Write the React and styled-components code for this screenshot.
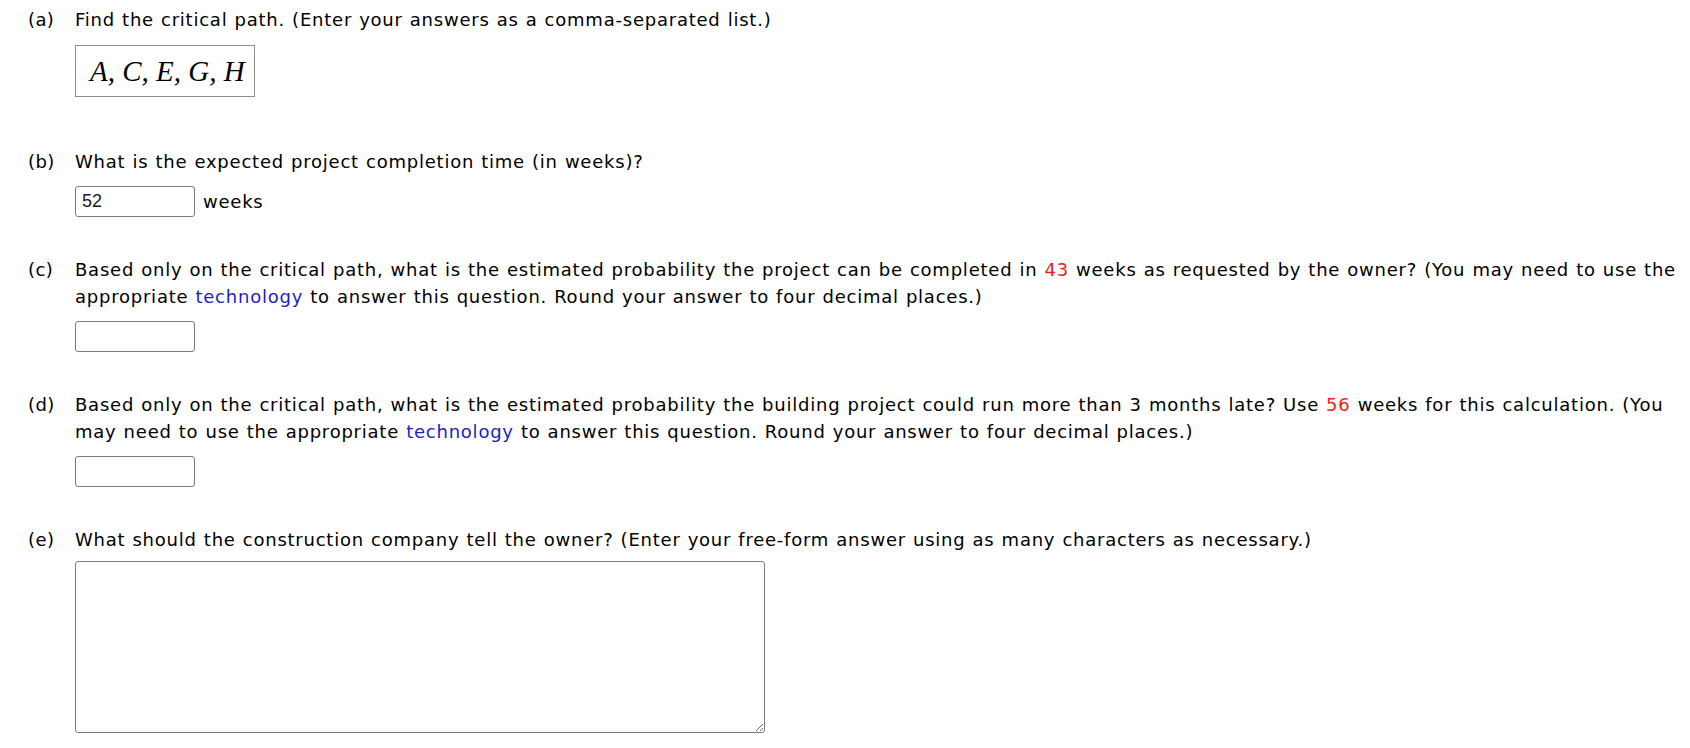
import React from "react";
import styled, { createGlobalStyle } from "styled-components";

const GlobalStyle = createGlobalStyle`
  html, body {
    margin: 0;
    padding: 0;
    background: #ffffff;
  }
  body {
    font-family: "DejaVu Sans", Verdana, sans-serif;
    color: #000000;
  }
`;

const Page = styled.div`
  padding: 6px 10px 0 28px;
  font-size: 18px;
  line-height: 27px;
  letter-spacing: 0.77px;
  word-spacing: 0.6px;
`;

const Part = styled.div`
  display: flex;
  margin-bottom: ${(p) => p.$after ?? 39}px;
`;

const Label = styled.div`
  flex: 0 0 47px;
  letter-spacing: 0.4px;
`;

const Body = styled.div`
  flex: 1;
  min-width: 0;
`;

const Question = styled.div``;

const Red = styled.span`
  color: #e8231a;
`;

const Link = styled.span`
  color: #1a1fc4;
`;

const AnswerRow = styled.div`
  display: flex;
  align-items: center;
  gap: 8px;
  margin-top: ${(p) => p.$top ?? 11}px;
`;

const MathBox = styled.div`
  box-sizing: border-box;
  height: 52px;
  padding: 0 9px 0 14px;
  display: flex;
  align-items: center;
  border: 1px solid #8c8c8c;
  font-family: "Liberation Serif", "Times New Roman", serif;
  font-style: italic;
  font-size: 29px;
  letter-spacing: 0;
  word-spacing: 0;
`;

const Field = styled.input`
  box-sizing: border-box;
  width: 120px;
  height: 31px;
  padding: 2px 6px;
  border: 1px solid #7a7a7a;
  border-radius: 3px;
  font-family: "Liberation Sans", Arial, sans-serif;
  font-size: 18px;
  letter-spacing: 0;
  color: #1a1a1a;
  background: #ffffff;
  outline: none;
`;

const Essay = styled.textarea`
  box-sizing: border-box;
  width: 690px;
  height: 172px;
  border: 1px solid #7a7a7a;
  border-radius: 3px;
  font-family: "Liberation Sans", Arial, sans-serif;
  font-size: 16px;
  background: #ffffff;
  outline: none;
  display: block;
`;

const Unit = styled.span``;

export default function App() {
  return (
    <>
      <GlobalStyle />
      <Page>
        <Part $after={51}>
          <Label>(a)</Label>
          <Body>
            <Question>
              Find the critical path. (Enter your answers as a comma-separated list.)
            </Question>
            <AnswerRow $top={12}>
              <MathBox>A, C, E, G, H</MathBox>
            </AnswerRow>
          </Body>
        </Part>

        <Part>
          <Label>(b)</Label>
          <Body>
            <Question>What is the expected project completion time (in weeks)?</Question>
            <AnswerRow>
              <Field defaultValue="52" />
              <Unit>weeks</Unit>
            </AnswerRow>
          </Body>
        </Part>

        <Part>
          <Label>(c)</Label>
          <Body>
            <Question>
              Based only on the critical path, what is the estimated probability the project
              can be completed in <Red>43</Red> weeks as requested by the owner? (You may need
              to use the appropriate <Link>technology</Link> to answer this question. Round
              your answer to four decimal places.)
            </Question>
            <AnswerRow>
              <Field />
            </AnswerRow>
          </Body>
        </Part>

        <Part>
          <Label>(d)</Label>
          <Body>
            <Question>
              Based only on the critical path, what is the estimated probability the building
              project could run more than 3 months late? Use <Red>56</Red> weeks for this
              calculation. (You may need to use the appropriate <Link>technology</Link> to
              answer this question. Round your answer to four decimal places.)
            </Question>
            <AnswerRow>
              <Field />
            </AnswerRow>
          </Body>
        </Part>

        <Part $after={0}>
          <Label>(e)</Label>
          <Body>
            <Question>
              What should the construction company tell the owner? (Enter your free-form answer
              using as many characters as necessary.)
            </Question>
            <AnswerRow $top={8}>
              <Essay />
            </AnswerRow>
          </Body>
        </Part>
      </Page>
    </>
  );
}
